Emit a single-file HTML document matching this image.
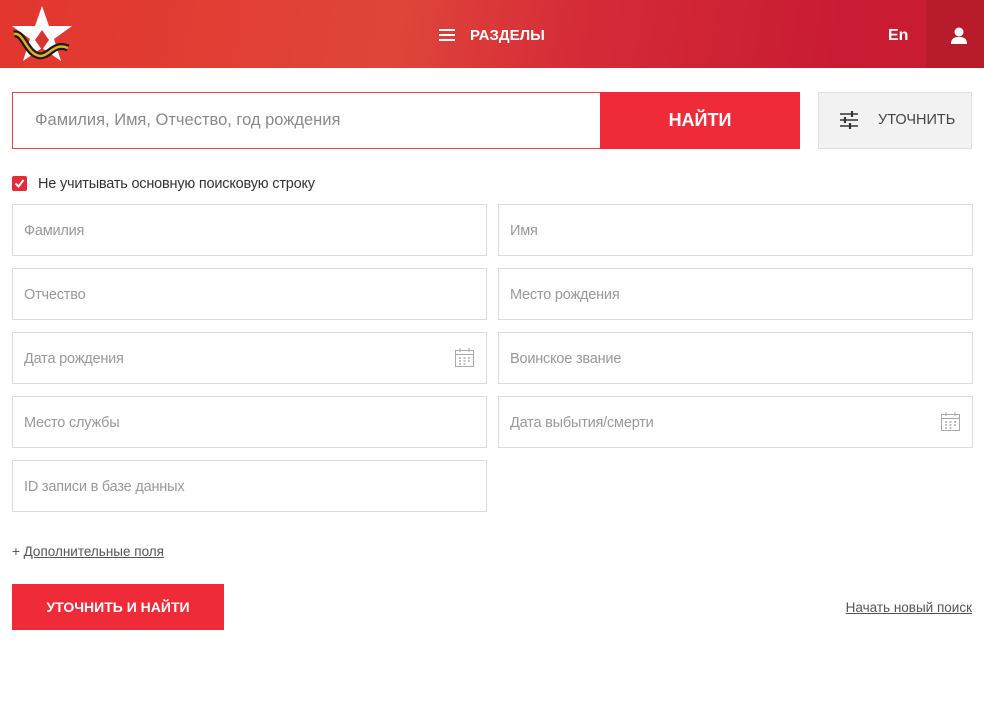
<!DOCTYPE html>
<html><head><meta charset="utf-8"><style>
*{box-sizing:border-box;margin:0;padding:0}
body{width:984px;height:718px;background:#fff;font-family:"Liberation Sans Narrow","Liberation Sans",sans-serif;color:#333;position:relative;overflow:hidden}
.hdr{position:absolute;left:0;top:0;width:984px;height:68px;background:linear-gradient(100deg,#e2362e 0%,#e0453a 40%,#d42a38 60%,#c91c34 85%,#c81c30 100%)}
.user{position:absolute;right:0;top:0;width:58px;height:68px;background:#b81b2a}
.a{position:absolute}
.f{position:absolute;border:1px solid #dcdcdc;height:52px;width:475px;font-size:14.5px;color:#999;padding-left:11px;line-height:52px;letter-spacing:-0.2px}
</style></head><body>
<div class="hdr"></div>
<div class="user"></div>
<svg class="a" style="left:10px;top:4px" width="64" height="60" viewBox="0 0 64 60">
<polygon points="32,2 39,22 62,22 44,35 51,57 32,44 13,57 20,35 2,22 25,22" fill="#fff"/>
<polygon points="32,26 39,36 32,46 25,36" fill="#d93533"/>
<path d="M4 30 C14 28,16 50,30 52 C40 52,44 38,58 44" stroke="#1a1a1a" stroke-width="7" fill="none"/>
<path d="M4 30 C14 28,16 50,30 52 C40 52,44 38,58 44" stroke="#e5b020" stroke-width="2.5" fill="none"/>
</svg>
<div class="a" style="left:439px;top:29px;width:16px;height:2px;background:#fff;box-shadow:0 5px 0 #fff,0 10px 0 #fff"></div>
<div class="a" style="left:470px;top:27px;color:#fff;font-weight:bold;font-size:15px">РАЗДЕЛЫ</div>
<div class="a" style="left:888px;top:27px;color:#fff;font-weight:bold;font-size:16px">En</div>
<svg class="a" style="left:950px;top:27px" width="18" height="17" viewBox="0 0 18 17"><circle cx="9" cy="5" r="4.5" fill="#fff"/><path d="M1 17 C1 11,5 10,9 10 C13 10,17 11,17 17Z" fill="#fff"/></svg>

<div class="a" style="left:12px;top:92px;width:589px;height:57px;border:1px solid #e0454f;border-right:none;font-size:16.5px;color:#8a8a8a;padding-left:22px;line-height:55px">Фамилия, Имя, Отчество, год рождения</div>
<div class="a" style="left:600px;top:92px;width:200px;height:57px;background:#ef2b39;color:#fff;font-weight:bold;font-size:18px;text-align:center;line-height:57px">НАЙТИ</div>
<div class="a" style="left:818px;top:92px;width:154px;height:57px;background:#f2f2f2;border:1px solid #e0e0e0;font-size:14.5px;color:#444;line-height:55px;padding-left:59px">УТОЧНИТЬ</div>
<svg class="a" style="left:838px;top:110px" width="22" height="20" viewBox="0 0 22 20" stroke="#333" stroke-width="1.5"><path d="M2 4H20M2 10H20M2 16H20"/><path d="M14 1V7M7 7V13M12 13V19" stroke-width="2.2"/></svg>

<div class="a" style="left:12px;top:176px;width:15px;height:15px;background:#e32c39;border-radius:2px"></div>
<svg class="a" style="left:12px;top:176px" width="15" height="15"><path d="M3.5 7.5L6.5 10.5L11.5 4" stroke="#fff" stroke-width="2" fill="none"/></svg>
<div class="a" style="left:38px;top:176px;font-size:14.5px;color:#333;letter-spacing:-0.2px">Не учитывать основную поисковую строку</div>

<div class="f" style="left:12px;top:204px">Фамилия</div>
<div class="f" style="left:498px;top:204px">Имя</div>
<div class="f" style="left:12px;top:268px">Отчество</div>
<div class="f" style="left:498px;top:268px">Место рождения</div>
<div class="f" style="left:12px;top:332px">Дата рождения</div>
<div class="f" style="left:498px;top:332px">Воинское звание</div>
<div class="f" style="left:12px;top:396px">Место службы</div>
<div class="f" style="left:498px;top:396px">Дата выбытия/смерти</div>
<div class="f" style="left:12px;top:460px">ID записи в базе данных</div>
<svg class="a" style="left:454px;top:347px" width="21" height="21" viewBox="0 0 21 21" fill="none" stroke="#aaa"><rect x="1.5" y="3.5" width="18" height="16"/><path d="M6 1V5M15 1V5M1.5 7.5H19.5"/><path d="M5 11h2M9.5 11h2M14 11h2M5 14h2M9.5 14h2M14 14h2M5 17h2M9.5 17h2" stroke-width="1.5"/></svg>
<svg class="a" style="left:940px;top:411px" width="21" height="21" viewBox="0 0 21 21" fill="none" stroke="#aaa"><rect x="1.5" y="3.5" width="18" height="16"/><path d="M6 1V5M15 1V5M1.5 7.5H19.5"/><path d="M5 11h2M9.5 11h2M14 11h2M5 14h2M9.5 14h2M14 14h2M5 17h2M9.5 17h2" stroke-width="1.5"/></svg>

<div class="a" style="left:12px;top:544px;font-size:13.5px;color:#555">+ <span style="text-decoration:underline">Дополнительные поля</span></div>
<div class="a" style="left:12px;top:584px;width:212px;height:46px;background:#ef2b39;color:#fff;font-weight:bold;font-size:14px;text-align:center;line-height:46px">УТОЧНИТЬ И НАЙТИ</div>
<div class="a" style="right:12px;top:600px;font-size:13.5px;color:#555;text-decoration:underline">Начать новый поиск</div>
</body></html>
